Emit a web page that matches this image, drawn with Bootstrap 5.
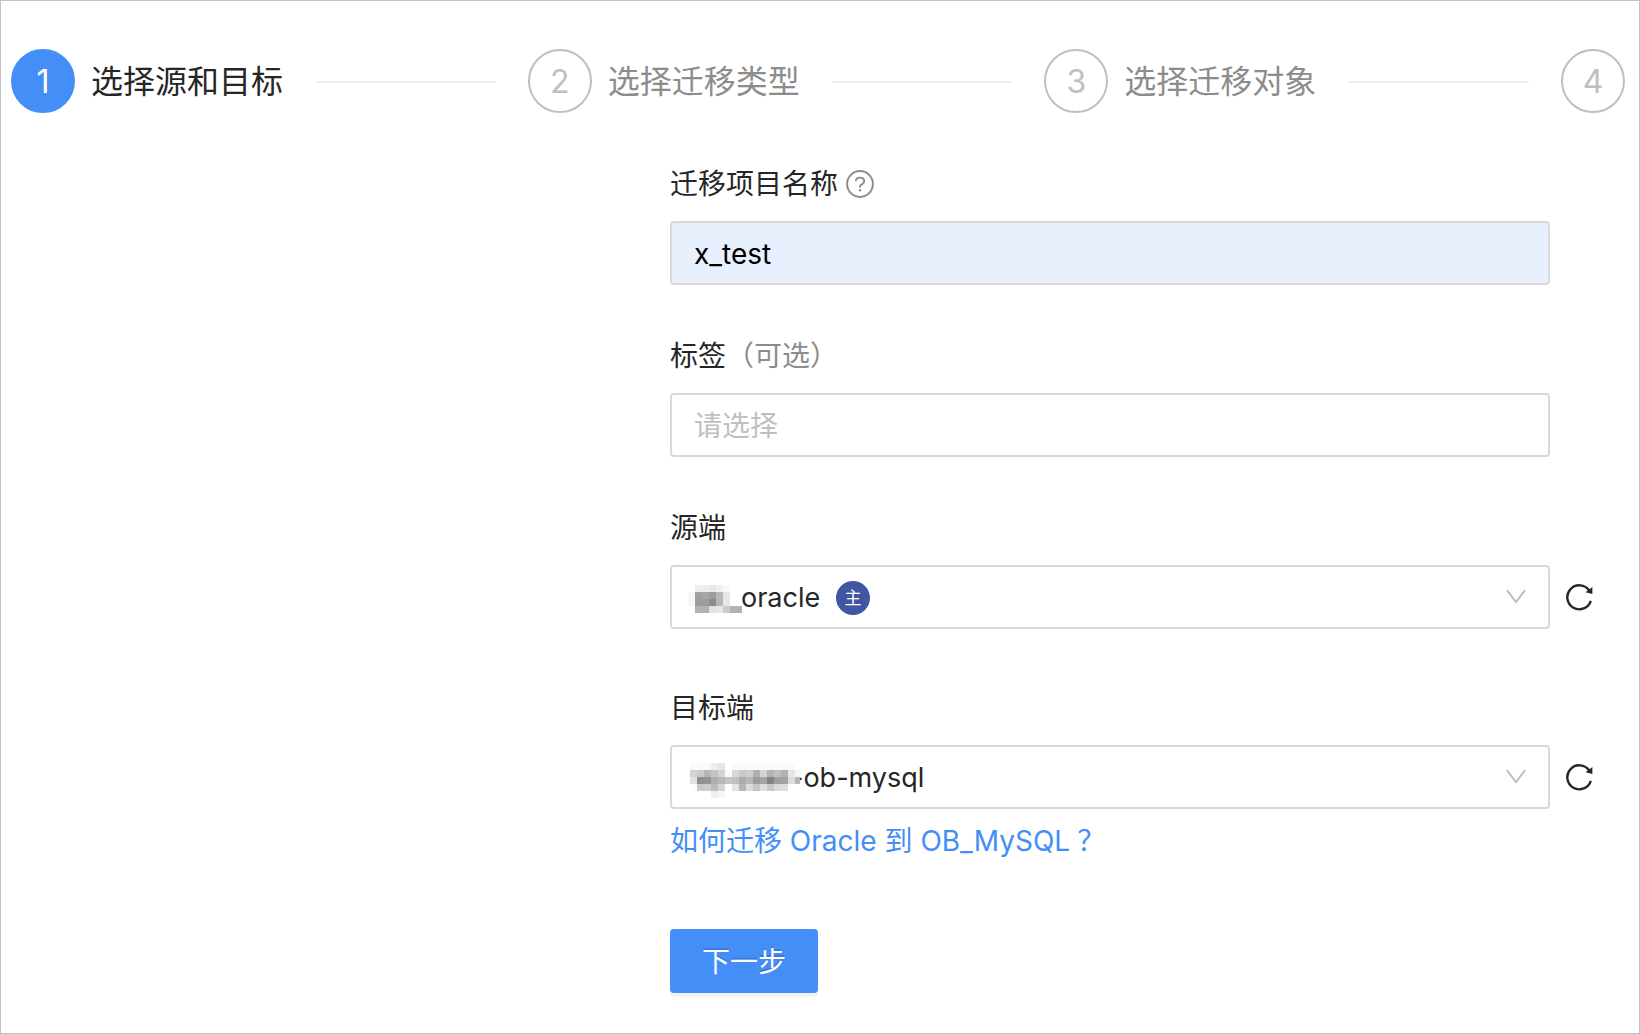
<!DOCTYPE html>
<html lang="zh-CN">
<head>
<meta charset="utf-8">
<meta name="viewport" content="width=device-width, initial-scale=1">
<title>选择源和目标</title>
<link href="https://cdn.jsdelivr.net/npm/bootstrap@5.3.0/dist/css/bootstrap.min.css" rel="stylesheet">
<style>
  :root { --brand: #448ef7; --ink: #262626; --muted: #8c8c8c; --faint: #bfbfbf; --line: #d9d9d9; }
  body { font-family: Inter, "Noto Sans CJK SC", sans-serif; font-size: 28px; line-height: 44px; color: var(--ink); background: #fff; }
  .wizard { min-height: 100vh; border: 1px solid #c2c2c2; padding: 48px 14px 40px 10px; }
  .step-item { font-size: 32px; color: var(--muted); }
  .step-item.active { color: var(--ink); }
  .step-dot { width: 64px; height: 64px; padding-top: 2px; border: 2px solid var(--faint); color: var(--faint); }
  .step-item.active .step-dot { background: var(--brand); border-color: var(--brand); color: #fff; }
  .step-title { margin-left: 16px; padding-top: 2px; }
  .step-line { height: 2px; margin: 2px 32px 0; background: #f0f0f0; }
  .project-form { margin: 48px 1.9% 0 40.83%; }
  .field { margin-bottom: 48px; }
  .field.spaced { margin-bottom: 56px; }
  .field-label { gap: 8px; margin-bottom: 14px; line-height: 46px; }
  .optional { color: var(--muted); }
  .field-row { gap: 16px; }
  .inset { margin-right: 44px; }
  .form-control, .form-select { height: 64px; padding: 2px 22px 0; border: 2px solid var(--line); border-radius: 4px; font-size: 28px; color: var(--ink); background-image: none; }
  .form-select { font-size: 27px; }
  .form-control::placeholder { color: var(--faint); opacity: 1; }
  .form-control.filled { background: #e8f0fe; color: #000; }
  .source-select { padding-left: 69px; }
  .target-select { padding-left: 119px; }
  .overlay { left: 18px; top: 0; height: 64px; pointer-events: none; }
  .role-tag { left: 166px; top: 16px; width: 34px; height: 34px; font-size: 17px; color: #fff; background: #4056a1; pointer-events: none; }
  .arrow { right: 24px; top: 24px; pointer-events: none; }
  .reload { width: 28px; height: 28px; padding: 0; border: 0; background: none; color: var(--ink); }
  .help-link { margin-top: 10px; color: var(--brand); }
  .full-mark { margin-left: 7px; }
  .next-btn { height: 64px; margin-top: 66px; padding: 2px 32px 0; border: 0; border-radius: 4px; color: #fff; background: var(--brand); box-shadow: 0 4px 0 #f3f3f3; text-shadow: 0 -2px 0 rgba(0,0,0,.12); }
</style>
<script src="https://cdn.jsdelivr.net/npm/bootstrap@5.3.0/dist/js/bootstrap.bundle.min.js"></script>
</head>
<body>
<main class="wizard">
  <ol class="list-unstyled d-flex mb-0">
    <li class="step-item active d-flex align-items-center flex-fill" aria-current="step">
      <span class="step-dot rounded-circle d-flex align-items-center justify-content-center flex-shrink-0">1</span>
      <span class="step-title text-nowrap">选择源和目标</span><span class="step-line flex-grow-1"></span>
    </li>
    <li class="step-item d-flex align-items-center flex-fill">
      <span class="step-dot rounded-circle d-flex align-items-center justify-content-center flex-shrink-0">2</span>
      <span class="step-title text-nowrap">选择迁移类型</span><span class="step-line flex-grow-1"></span>
    </li>
    <li class="step-item d-flex align-items-center flex-fill">
      <span class="step-dot rounded-circle d-flex align-items-center justify-content-center flex-shrink-0">3</span>
      <span class="step-title text-nowrap">选择迁移对象</span><span class="step-line flex-grow-1"></span>
    </li>
    <li class="step-item"><span class="step-dot rounded-circle d-flex align-items-center justify-content-center">4</span></li>
  </ol>

  <form class="project-form">
    <div class="field">
      <div class="field-label d-flex align-items-center">
        <label for="projectName">迁移项目名称</label>
        <svg width="28" height="28" viewBox="0 0 28 28" fill="none" stroke="#8c8c8c" role="img" aria-label="帮助">
          <circle cx="14" cy="14" r="12.9" stroke-width="2"/>
          <path d="M9.8 11.2C9.8 8.9 11.6 7.6 14 7.6s4.2 1.4 4.2 3.5c0 1.7-1.1 2.7-2.5 3.3-1.1.5-1.7 1.1-1.7 2.3v.9" stroke-width="1.8"/>
          <circle cx="14" cy="20.3" r="1.2" fill="#8c8c8c" stroke="none"/>
        </svg>
      </div>
      <div class="inset"><input class="form-control filled" id="projectName" type="text" value="x_test"></div>
    </div>

    <div class="field">
      <div class="field-label d-flex"><label for="tags">标签<span class="optional">（可选）</span></label></div>
      <div class="inset"><input class="form-control" id="tags" type="text" placeholder="请选择"></div>
    </div>

    <div class="field spaced">
      <div class="field-label d-flex"><label for="source">源端</label></div>
      <div class="field-row d-flex align-items-center">
        <div class="position-relative flex-grow-1">
          <select class="form-select source-select" id="source"><option>oracle</option></select>
          <svg class="overlay position-absolute" width="54" height="64" shape-rendering="crispEdges" aria-hidden="true">
            <g id="sourceMask"></g>
          </svg>
          <span class="role-tag position-absolute rounded-circle d-flex align-items-center justify-content-center">主</span>
          <svg class="arrow position-absolute" width="20" height="16" viewBox="0 0 20 16" fill="none" stroke="#bfbfbf" stroke-width="2"><path d="M.9 1.2 10 13.2 19.1 1.2"/></svg>
        </div>
        <button class="reload d-flex" type="button" aria-label="刷新源端">
          <svg width="28" height="28" viewBox="0 0 28 28"><path d="M24.8 17.8A12 12 0 1 1 23.2 7.5" fill="none" stroke="currentColor" stroke-width="2.4"/><path d="M26.4 4v6.9l-6.8-1.6z" fill="currentColor"/></svg>
        </button>
      </div>
    </div>

    <div>
      <div class="field-label d-flex"><label for="target">目标端</label></div>
      <div class="field-row d-flex align-items-center">
        <div class="position-relative flex-grow-1">
          <select class="form-select target-select" id="target"><option>-ob-mysql</option></select>
          <svg class="overlay position-absolute" width="112" height="64" shape-rendering="crispEdges" aria-hidden="true">
            <g id="targetMask"></g>
          </svg>
          <svg class="arrow position-absolute" width="20" height="16" viewBox="0 0 20 16" fill="none" stroke="#bfbfbf" stroke-width="2"><path d="M.9 1.2 10 13.2 19.1 1.2"/></svg>
        </div>
        <button class="reload d-flex" type="button" aria-label="刷新目标端">
          <svg width="28" height="28" viewBox="0 0 28 28"><path d="M24.8 17.8A12 12 0 1 1 23.2 7.5" fill="none" stroke="currentColor" stroke-width="2.4"/><path d="M26.4 4v6.9l-6.8-1.6z" fill="currentColor"/></svg>
        </button>
      </div>
      <a class="help-link d-table text-decoration-none" href="#">如何迁移 Oracle 到 OB_MySQL<span class="full-mark">？</span></a>
    </div>

    <button class="next-btn" type="submit">下一步</button>
  </form>
</main>
<script>
  // Grey levels of the blocks that hide the account prefix, one row per line; ".." leaves a block empty.
  function drawMask(id, x, y, rows) {
    const g = document.getElementById(id);
    rows.forEach((row, r) => row.split(' ').forEach((v, c) => {
      if (v === '..') return;
      const b = document.createElementNS('http://www.w3.org/2000/svg', 'rect');
      b.setAttribute('x', x + c * 7);
      b.setAttribute('y', y + r * 7);
      b.setAttribute('width', 7);
      b.setAttribute('height', 7);
      b.setAttribute('fill', '#' + v + v + v);
      g.appendChild(b);
    }));
  }
  drawMask('sourceMask', 0, 20, [
    '.. ee ee e8 f0 fa ..',
    'f6 a0 a6 9c b8 e6 ..',
    'f6 9c 9c 8c b6 e6 ..',
    '.. b2 b2 e2 e6 cc b2 b2'
  ]);
  drawMask('targetMask', 2, 18, [
    'fa fa fa ee e6 .. fa fa fa fa fa fa fa fa fa',
    'd2 ca b6 c4 d4 fa d8 ca ce b0 d4 b4 c0 b2 e6 f6',
    'e2 90 94 b0 b8 c4 c0 ac b8 9c a4 84 a0 a4 dc b6',
    'fc ca ce bc d4 fe e4 b6 dc c6 de c8 da de',
    '.. .. .. ee f6'
  ]);
</script>
</body>
</html>
